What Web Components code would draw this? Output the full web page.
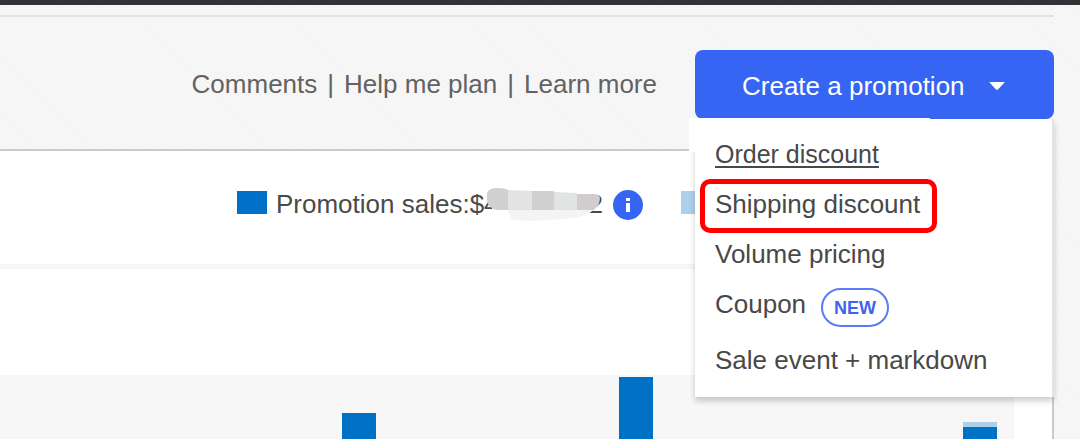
<!DOCTYPE html>
<html lang="en">
<head>
<meta charset="utf-8">
<meta name="viewport" content="width=device-width, initial-scale=1">
<title>Promotions</title>
<style>
html, body { margin: 0; }
body { font: 26px/30px "Liberation Sans", Arial, sans-serif; color: #4a4a4a; }
</style>
</head>
<body>
<promo-page>
  <page-links slot="header"></page-links>
  <promo-menu slot="header" label="Create a promotion">
    <menu-entry underlined>Order discount</menu-entry>
    <menu-entry marked>Shipping discount</menu-entry>
    <menu-entry>Volume pricing</menu-entry>
    <menu-entry badge="NEW">Coupon</menu-entry>
    <menu-entry>Sale event + markdown</menu-entry>
  </promo-menu>
  <chart-legend></chart-legend>
  <sales-chart></sales-chart>
</promo-page>
<script>
class Base extends HTMLElement {
  constructor() {
    super();
    this.attachShadow({ mode: "open" }).innerHTML = this.constructor.html;
  }
}

customElements.define("promo-page", class extends Base {
  static html = `
    <style>
      :host {
        display: flex; flex-direction: column; min-height: 100vh; box-sizing: border-box;
        border-top: 5px solid #333238;
        background: repeating-linear-gradient(45deg, #f7f7f7 0 2px, #f5f5f5 2px 4px);
      }
      .column { flex: 1; display: flex; flex-direction: column; margin: 10px 26px 0 0; }
      header {
        display: flex; align-items: center; justify-content: flex-end; gap: 38px;
        padding: 33px 0 30px; border-top: 2px solid #e3e3e3;
      }
      main {
        flex: 1; display: flex; flex-direction: column; background: #fff;
        border-top: 2px solid #cbcbcb; border-right: 2px solid #cbcbcb;
      }
    </style>
    <div class="column">
      <header><slot name="header"></slot></header>
      <main><slot></slot></main>
    </div>`;
});

customElements.define("page-links", class extends Base {
  static html = `
    <style>
      :host { display: block; color: #626262; }
      nav { display: flex; gap: 10px; padding-bottom: 2px; white-space: nowrap; }
      a { color: inherit; text-decoration: none; }
    </style>
    <nav><a href="#comments">Comments</a><span>|</span><a href="#plan">Help me plan</a><span>|</span><a href="#learn">Learn more</a></nav>`;
});

customElements.define("promo-menu", class extends Base {
  static html = `
    <style>
      :host { display: block; position: relative; width: 359px; }
      button {
        display: flex; align-items: center; gap: 24px; width: 100%; height: 69px;
        padding: 2px 47px 0; border: 0; border-radius: 8px;
        background: #3665f3; color: #fff; font: inherit; white-space: nowrap;
      }
      .menu {
        position: absolute; top: 100%; left: 0; right: 0; z-index: 1;
        box-sizing: border-box; padding: 10px 20px 12px; border-right: 2px solid #e4e4e4;
        background: #fff; box-shadow: 0 4px 6px rgba(0, 0, 0, .2);
      }
      .menu::before {
        content: ""; position: absolute; left: -6px; top: -1px; width: 241px; height: 34px;
        background: #fff;
      }
    </style>
    <button type="button" aria-haspopup="true" aria-expanded="true">
      <span></span>
      <svg width="16" height="8" viewBox="0 0 16 8" aria-hidden="true"><path d="M1 0h14q1 0 .3.8L9 7.4q-1 .8-2 0L.7.8Q0 0 1 0z" fill="#fff"/></svg>
    </button>
    <div class="menu"><slot></slot></div>`;
  connectedCallback() {
    this.shadowRoot.querySelector("span").textContent = this.getAttribute("label");
  }
});

customElements.define("menu-entry", class extends Base {
  static html = `
    <style>
      :host { display: flex; align-items: center; gap: 15px; height: 50px; position: relative; white-space: nowrap; }
      :host([badge]) { height: 56px; }
      a { color: #484848; text-decoration: none; }
      :host([badge]) a { padding-bottom: 6px; }
      :host([underlined]) a { font-size: 25px; text-decoration: underline; text-decoration-thickness: 2px; text-underline-offset: 3px; }
      .badge {
        display: none; box-sizing: border-box; width: 68px; height: 39px;
        border: 2px solid #5b7cf5; border-radius: 20px; color: #3f62f0;
        font-size: 18px; font-weight: 700; line-height: 36px; text-align: center;
      }
      :host([badge]) .badge { display: block; }
      :host([marked])::after {
        content: ""; position: absolute; left: -15px; top: 0; width: 237px; height: 54px;
        box-sizing: border-box; border: 5px solid #fe0000; border-radius: 10px;
      }
    </style>
    <a href="#promotion"><slot></slot></a><span class="badge"></span>`;
  connectedCallback() {
    this.shadowRoot.querySelector(".badge").textContent = this.getAttribute("badge") || "";
  }
});

customElements.define("chart-legend", class extends Base {
  static html = `
    <style>
      :host {
        display: flex; align-items: center; height: 107px; padding: 0 0 6px 237px;
        border-bottom: 5px solid #f6f6f6; white-space: nowrap;
      }
      .swatch { flex: none; width: 30px; height: 23px; margin-right: 9px; margin-bottom: 4px; background: #0070c9; }
      .light { background: #aecfea; margin-left: 38px; }
      .text { padding-bottom: 2px; }
      .mask { flex: none; position: relative; margin: 0 -12px 0 -13px; }
      .info { flex: none; margin-left: 10px; }
    </style>
    <span class="swatch"></span>
    <span class="text">Promotion sales:$4</span>
    <svg class="mask" width="115" height="34" viewBox="0 0 115 34" aria-hidden="true">
      <path d="M6 16h16v14H6z" fill="#fff"/>
      <path d="M22 22h86q-8 6-22 8-32 4-60 2z" fill="#f4f4f4"/>
      <path d="M22 2l24 1v19H22z" fill="#e2e3e2"/>
      <path d="M46 3h22v19H46z" fill="#d1cfcf"/>
      <path d="M68 4l23 1v17H68z" fill="#e2e4e3"/>
      <path d="M91 6h17q6 0 6 5-1 8-7 11H91z" fill="#d1cdce"/>
      <path d="M1 5Q3 0 11 0q8 0 11 2v20H11Q1 20 1 11z" fill="#d1cfcf"/>
    </svg>
    <span class="text">2</span>
    <svg class="info" width="30" height="30" viewBox="0 0 30 30" role="img" aria-label="Information">
      <circle cx="15" cy="15" r="15" fill="#3665f3"/>
      <path d="M13 8h4v3h-4zM13 13h4v9h-4z" fill="#fff"/>
    </svg>
    <span class="swatch light"></span>`;
});

customElements.define("sales-chart", class extends Base {
  static html = `
    <style>
      :host { flex: 1; display: flex; margin: 106px 38px 0 0; min-height: 64px; background: #f7f7f7; }
      .bars {
        flex: 1; display: grid; align-items: end;
        grid-template-columns: 342fr 34px 243fr 34px 310fr 34px 17fr;
      }
      i { background: #0072c6; box-sizing: border-box; }
      .a { grid-column: 2; height: 26px; }
      .b { grid-column: 4; height: 62px; }
      .c { grid-column: 6; height: 17px; border-top: 5px solid #aecfea; }
    </style>
    <div class="bars"><i class="a"></i><i class="b"></i><i class="c"></i></div>`;
});
</script>
</body>
</html>
